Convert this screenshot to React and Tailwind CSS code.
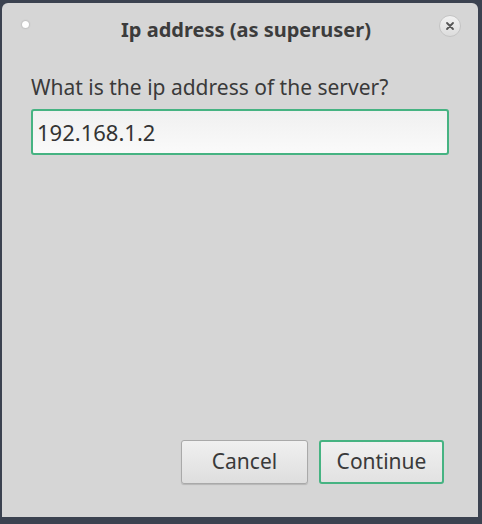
import React from "react";

const App = () => {
    return (
        <div className="flex h-[524px] w-[482px] bg-[#3b4250] pl-[2px] pr-[5px] pt-[3px] pb-[7px] font-['Noto_Sans',sans-serif]">
            <div className="flex flex-1 flex-col rounded-t-[6px] bg-[#d6d6d6]">
                <div className="relative flex h-[46px] items-start px-[20px] pt-[17px]">
                    <span className="mt-[1px] h-[7px] w-[7px] rounded-full bg-white shadow-[0_0_2px_rgba(0,0,0,0.3)]" />
                    <h1 className="-mt-[3px] ml-[24px] flex-1 text-center text-[20px] leading-[26px] font-bold text-[#3c3c3c]">
                        Ip address (as superuser)
                    </h1>
                    <button
                        type="button"
                        aria-label="Close"
                        className="-mt-[5px] -mr-[3px] flex h-[22px] w-[22px] items-center justify-center rounded-full border border-[#c4c4c4] bg-gradient-to-b from-[#f2f2f2] to-[#dcdcdc]"
                    >
                        <svg width="10" height="10" viewBox="0 0 10 10">
                            <path d="M2 2 L8 8 M8 2 L2 8" stroke="#555" strokeWidth="1.8" strokeLinecap="round" />
                        </svg>
                    </button>
                </div>

                <div className="flex flex-1 flex-col px-[29px] pt-[24px] pb-[33px]">
                    <p className="text-[21px] leading-[28px] text-[#3a3a3a]">What is the ip address of the server?</p>
                    <input
                        type="text"
                        defaultValue="192.168.1.2"
                        className="mt-[8px] h-[46px] w-[418px] rounded-[3px] border-2 border-[#46b382] bg-gradient-to-b from-[#f0f0f0] to-[#fafafa] px-[4px] text-[22px] text-[#333] outline-none"
                    />

                    <div className="mt-auto flex justify-end gap-[11px] pr-[5px]">
                        <button
                            type="button"
                            className="h-[44px] w-[127px] rounded-[3px] border border-[#a9a9a9] bg-gradient-to-b from-[#f0f0f0] to-[#dedede] text-[21px] text-[#3a3a3a] shadow-[0_1px_1px_rgba(0,0,0,0.15)]"
                        >
                            Cancel
                        </button>
                        <button
                            type="button"
                            className="h-[44px] w-[125px] rounded-[3px] border-2 border-[#46b382] bg-gradient-to-b from-[#f0f0f0] to-[#e2e2e2] text-[21px] text-[#3a3a3a]"
                        >
                            Continue
                        </button>
                    </div>
                </div>
            </div>
        </div>
    );
};

export default App;
